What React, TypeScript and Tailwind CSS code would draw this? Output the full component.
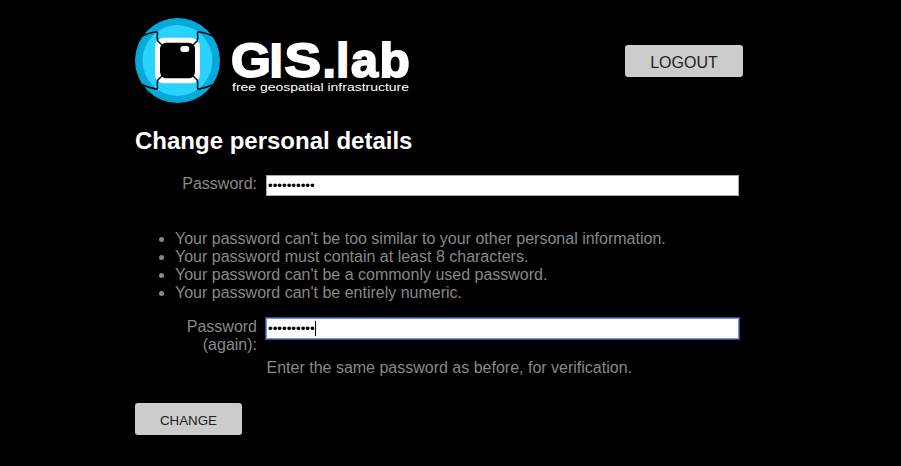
const LETTERS = [
  { ch: 'G', x: 96, sx: 1.07 },
  { ch: 'I', x: 134.6, sx: 1 },
  { ch: 'S', x: 149.6, sx: 1.14 },
  { ch: '.', x: 187.5, sx: 1 },
  { ch: 'l', x: 201, sx: 1 },
  { ch: 'a', x: 216, sx: 1.01 },
  { ch: 'b', x: 244.6, sx: 1.03 },
];

function Logo() {
  return (
    <svg width="277" height="88" viewBox="0 0 277 88" className="block font-['Liberation_Sans',sans-serif]">
      <circle cx="42.5" cy="42.5" r="42.5" fill="#03a9d9" />
      <ellipse cx="42.5" cy="42.5" rx="35" ry="35.5" fill="#2ad2ff" />
      <rect x="20" y="19.7" width="45" height="45.6" rx="9" fill="#fff" />
      <rect x="25" y="24.7" width="35" height="35.6" rx="6.5" fill="#000" />
      <rect x="45.3" y="28" width="9" height="6" rx="3" fill="#fff" />
      <g fill="none" stroke="#000" strokeWidth="1.5" strokeLinejoin="round">
        <path d="M5 19 Q13 15 21 13.8 Q22.6 13.6 22.5 15.5 Q21.8 20 22.8 23 L28 28" />
        <path d="M80 19 Q72 15 64 13.8 Q62.4 13.6 62.5 15.5 Q63.2 20 62.2 23 L57 28" />
        <path d="M5 66 Q13 69.5 21 71 Q22.6 71.2 22.5 69.3 Q21.8 65 22.8 62 L28 57" />
        <path d="M80 66 Q72 69.5 64 71 Q62.4 71.2 62.5 69.3 Q63.2 65 62.2 62 L57 57" />
      </g>
      <g fill="#fff" stroke="#fff" strokeWidth="1.9" fontWeight="700" fontSize="48">
        {LETTERS.map((l) => (
          <text key={l.ch} transform={`translate(${l.x} 59.3) scale(${l.sx} 1)`}>
            {l.ch}
          </text>
        ))}
      </g>
      <text x="97" y="73.3" fontSize="11" fill="#fff" textLength="177" lengthAdjust="spacingAndGlyphs">
        free geospatial infrastructure
      </text>
    </svg>
  );
}

const RULES = [
  "Your password can't be too similar to your other personal information.",
  'Your password must contain at least 8 characters.',
  "Your password can't be a commonly used password.",
  "Your password can't be entirely numeric.",
];

const INPUT =
  "block h-[21px] w-[473px] border bg-white px-px font-['Liberation_Sans',sans-serif] text-[13.333px] text-black outline-none";

export default function App() {
  return (
    <div className="h-[466px] w-full overflow-hidden bg-black pt-[18px] font-['Liberation_Sans',Arial,sans-serif] text-base leading-[18px] text-[#888]">
      <div className="ml-[135px] w-[608px]">
        <header className="flex h-[88px] items-start justify-between">
          <Logo />
          <button className="mt-[27px] h-8 w-[118px] rounded-[3px] bg-[#ccc] pt-[3px] text-base leading-[29px] text-[#222]">
            LOGOUT
          </button>
        </header>
        <h1 className="mt-[21px] text-2xl leading-7 font-bold text-white">Change personal details</h1>
        <form>
          <div className="mt-5 flex items-start">
            <label className="mr-[9px] w-[122px] text-right">Password:</label>
            <input type="password" readOnly defaultValue="abcdefghij" className={`${INPUT} border-[#a9a9a9]`} />
          </div>
          <ul className="mt-[34px] list-disc pl-10">
            {RULES.map((r) => (
              <li key={r}>{r}</li>
            ))}
          </ul>
          <div className="mt-4 flex items-start">
            <label className="mr-[9px] w-[122px] text-right">
              Password
              <br />
              (again):
            </label>
            <div className="relative">
              <input
                type="password"
                readOnly
                defaultValue="abcdefghij"
                className={`${INPUT} border-[#739ddd] shadow-[0_0_0_1px_#2c4b82]`}
              />
              <span className="absolute top-[3px] left-[49px] h-[15px] w-px bg-black" />
            </div>
          </div>
          <p className="mt-[5px] ml-[131.5px]">Enter the same password as before, for verification.</p>
          <button
            type="button"
            className="mt-[26px] block h-8 w-[107px] rounded-[3px] bg-[#ccc] pt-[3px] text-[13.333px] leading-[29px] text-[#222]"
          >
            CHANGE
          </button>
        </form>
      </div>
    </div>
  );
}
